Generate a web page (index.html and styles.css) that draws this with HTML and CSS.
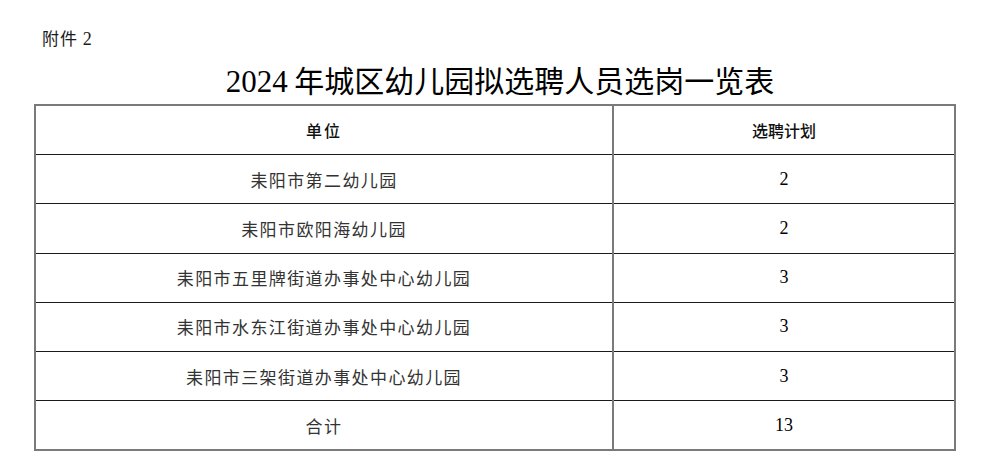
FILE: index.html
```html
<!DOCTYPE html>
<html lang="zh-CN">
<head>
<meta charset="utf-8">
<link rel="stylesheet" href="styles.css">
</head>
<body>
<div class="page">
  <div class="attach">附件 <span class="num">2</span></div>
  <h1 class="title"><span class="num">2024</span> 年城区幼儿园拟选聘人员选岗一览表</h1>
  <table class="grid">
    <thead>
      <tr><th class="unit head-unit">单位</th><th class="plan">选聘计划</th></tr>
    </thead>
    <tbody>
      <tr><td class="unit">耒阳市第二幼儿园</td><td class="plan">2</td></tr>
      <tr><td class="unit">耒阳市欧阳海幼儿园</td><td class="plan">2</td></tr>
      <tr><td class="unit">耒阳市五里牌街道办事处中心幼儿园</td><td class="plan">3</td></tr>
      <tr><td class="unit">耒阳市水东江街道办事处中心幼儿园</td><td class="plan">3</td></tr>
      <tr><td class="unit">耒阳市三架街道办事处中心幼儿园</td><td class="plan">3</td></tr>
      <tr><td class="unit">合计</td><td class="plan">13</td></tr>
    </tbody>
  </table>
</div>
</body>
</html>
```
FILE: styles.css
```css
html, body {
  margin: 0;
  padding: 0;
  background: #ffffff;
}
.page {
  padding: 28px 26px 0 34px;
  font-family: "Noto Sans CJK SC", "Noto Sans", sans-serif;
  color: #000;
}
.attach {
  margin-left: 8px;
  font-size: 17px;
  letter-spacing: 1px;
  line-height: 20px;
  font-weight: 400;
  color: #1a1a1a;
}
.attach .num {
  font-family: "Liberation Serif", serif;
  font-size: 18px;
}
.title {
  margin: 12px 0 0 0;
  text-align: center;
  font-size: 30px;
  line-height: 36px;
  font-weight: 400;
  color: #000;
  padding-left: 10px;
  height: 43px;
}
.title .num {
  font-family: "Liberation Serif", serif;
  font-size: 31px;
}
.grid {
  width: 922px;
  border-collapse: collapse;
  border: 2px solid #7a7a7a;
  table-layout: fixed;
}
.grid th, .grid td {
  height: 48.2px;
  padding: 0;
  text-align: center;
  vertical-align: middle;
  border-top: 1px solid #1a1a1a;
  border-bottom: 1px solid #1a1a1a;
}
.grid .unit {
  width: 576px;
  border-right: 2px solid #7a7a7a;
}
.grid td.unit {
  font-size: 17px;
  letter-spacing: 1.4px;
  color: #333;
  font-weight: 400;
}
.grid th {
  font-size: 16px;
  font-weight: 500;
  color: #111;
}
.grid th.head-unit {
  letter-spacing: 2px;
}
.grid td.plan {
  font-family: "Liberation Serif", serif;
  font-size: 18px;
  color: #000;
}
```
